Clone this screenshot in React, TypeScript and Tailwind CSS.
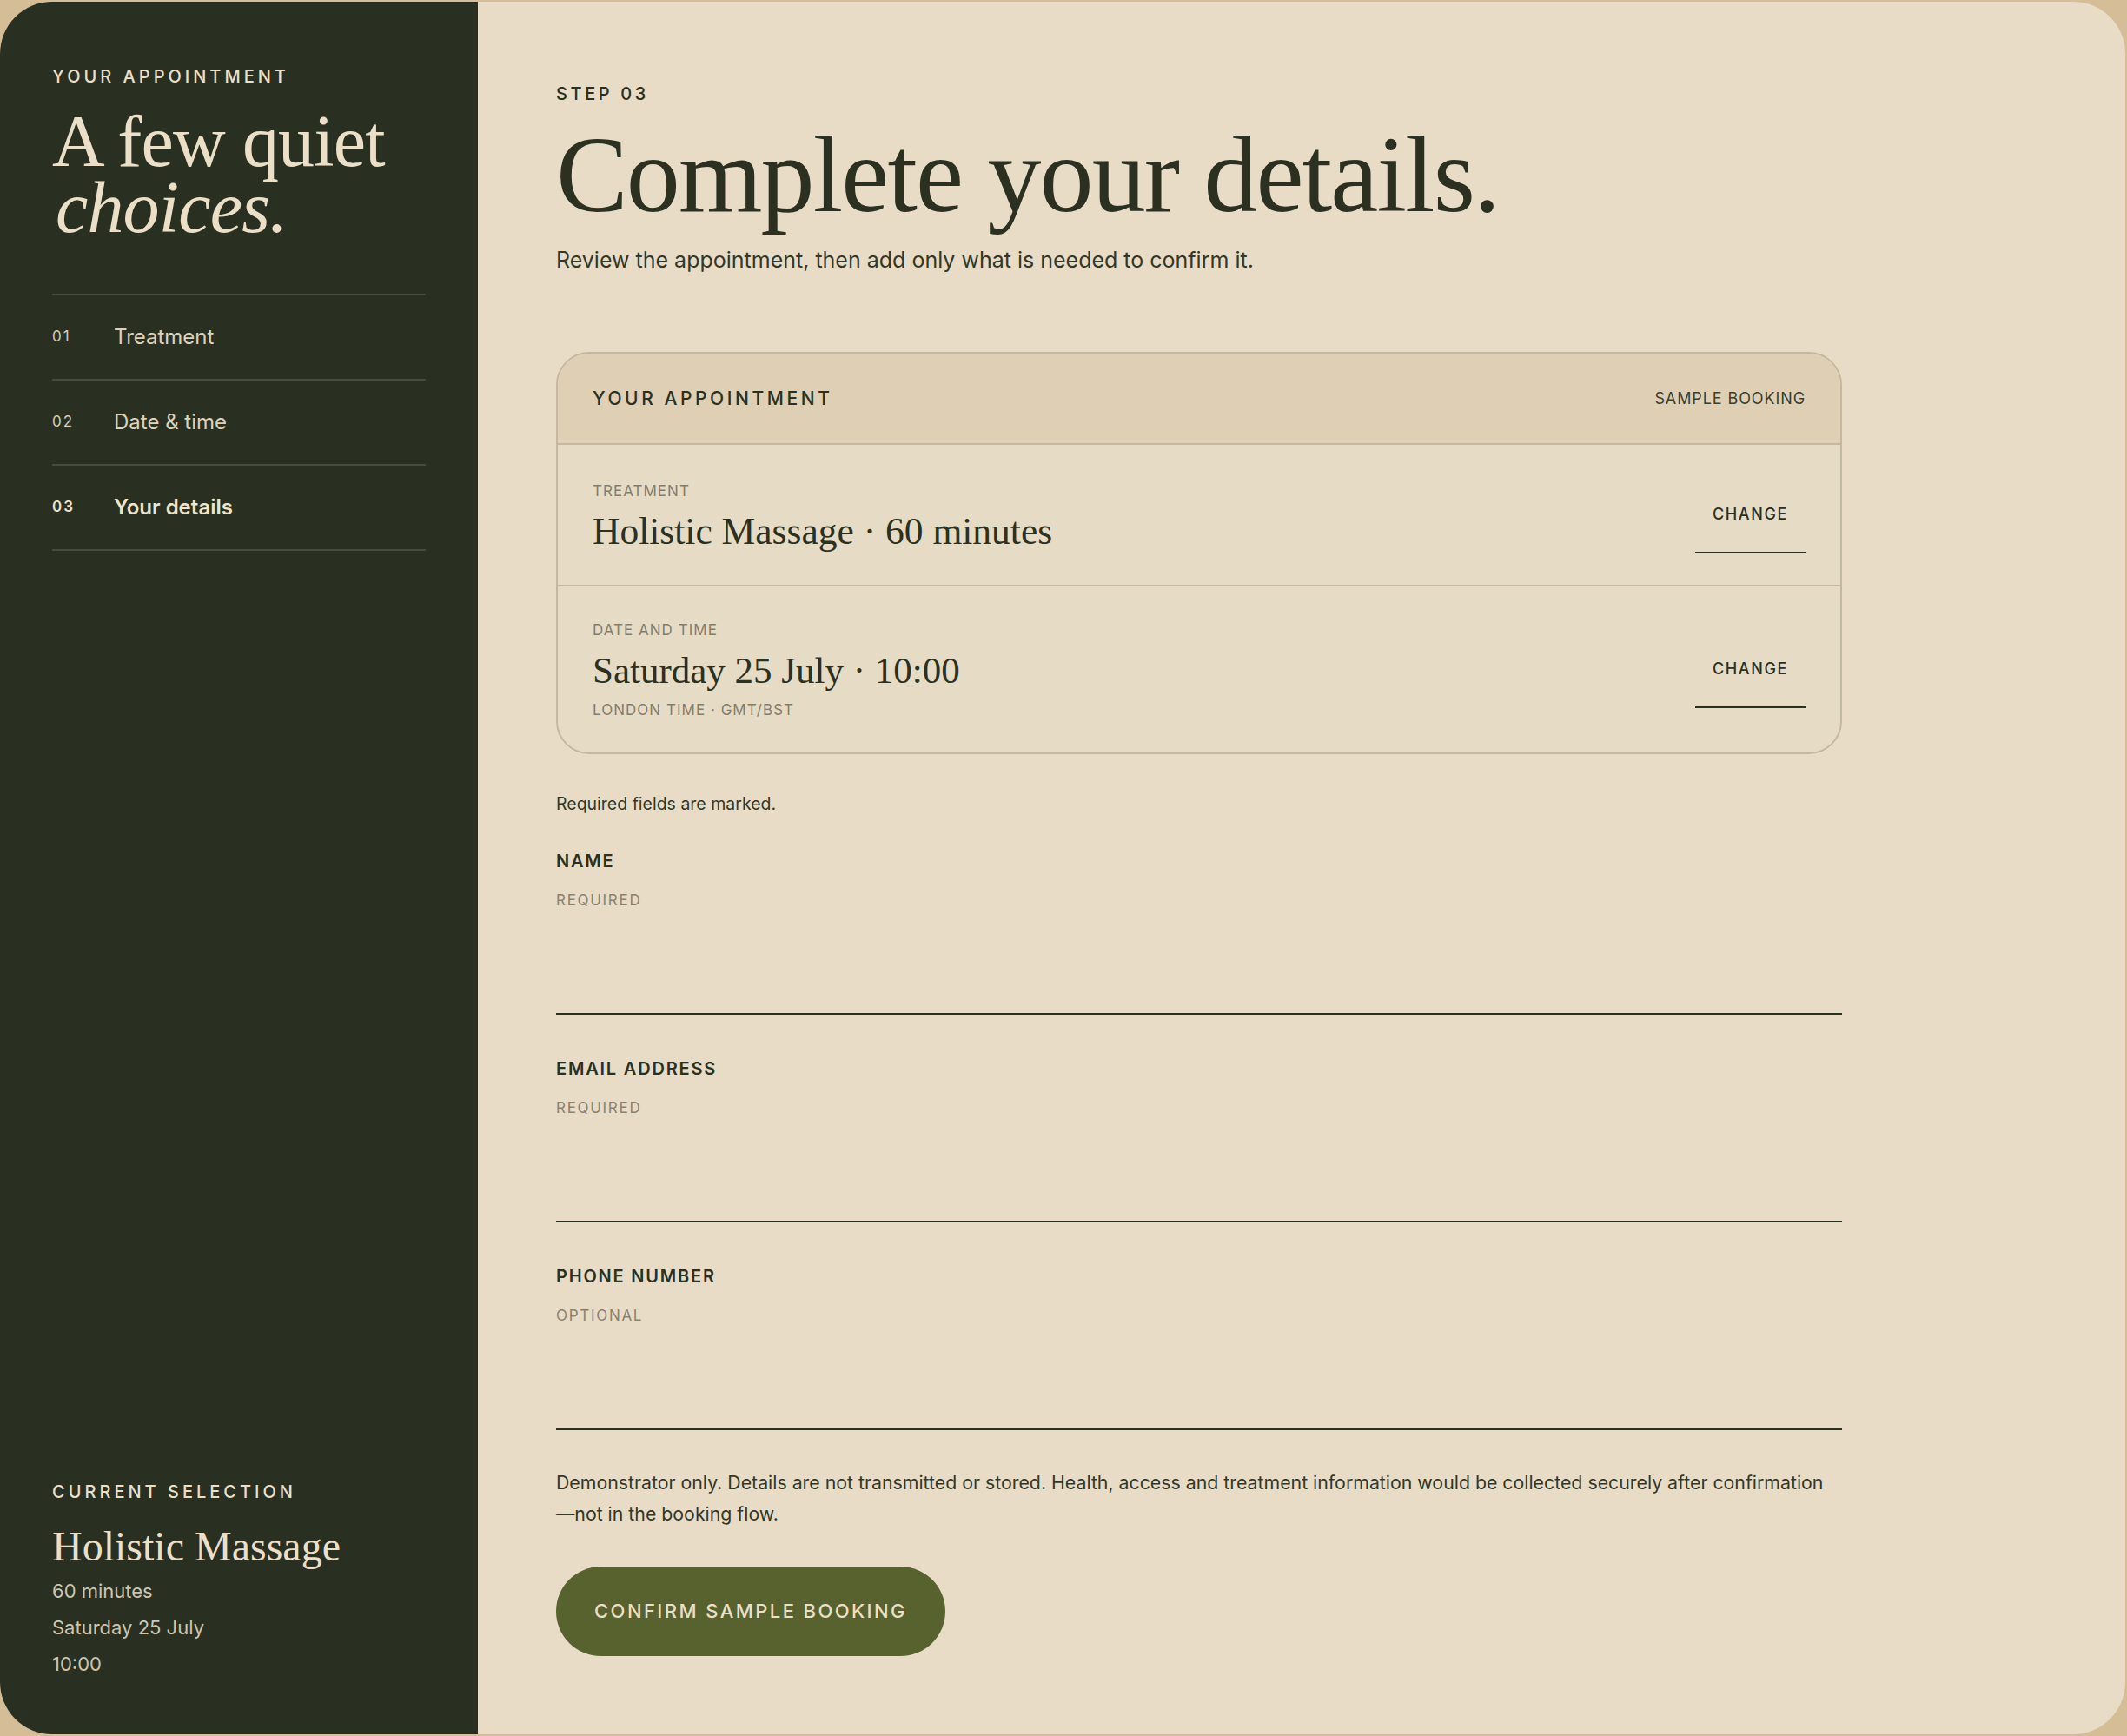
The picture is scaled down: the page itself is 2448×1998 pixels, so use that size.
import React from "react";

const serif = { fontFamily: '"Liberation Serif", "Times New Roman", serif' };

function Field({ label, hint }: { label: string; hint: string }) {
  return (
    <div className="flex flex-col">
      <div className="text-[20px] leading-[28px] font-semibold tracking-[0.09em] text-[#2b3020]">{label}</div>
      <div className="mt-[19px] text-[17px] leading-[24px] tracking-[0.1em] text-[#8a8271]">{hint}</div>
      <div className="h-[120px] border-b-2 border-[#2b3020]" />
    </div>
  );
}

function NavRow({ n, label, active }: { n: string; label: string; active?: boolean }) {
  return (
    <div className="flex h-[98px] items-center border-b-2 border-[#474d3c]">
      <div className={`w-[71px] text-[17px] tracking-[0.12em] ${active ? "text-[#ece0c8] font-semibold" : "text-[#d5cbb5]"}`}>{n}</div>
      <div className={`text-[24px] ${active ? "text-[#efe4cc] font-semibold" : "text-[#ddd2bb]"}`}>{label}</div>
    </div>
  );
}

function ChangeBtn() {
  return (
    <button className="flex h-[88px] items-center border-b-2 border-[#2b3020] px-[20px] text-[18px] font-medium tracking-[0.09em] text-[#2b3020]">
      CHANGE
    </button>
  );
}

export default function App() {
  return (
    <div
      className="h-[1998px] w-full bg-[#d5bd98] pt-[2px] pr-[2px] pb-[2px]"
      style={{ fontFamily: 'Inter, "Liberation Sans", sans-serif' }}
    >
      <div className="flex h-full overflow-hidden rounded-[60px] bg-[#e8dcc6]">
        {/* Sidebar */}
        <aside className="flex h-full w-[550px] shrink-0 flex-col justify-between bg-[#2a3021] px-[60px] pt-[72px] pb-[60px] text-[#ebdfc8]">
          <div>
            <div className="text-[20px] leading-[28px] font-medium tracking-[0.2em]">YOUR APPOINTMENT</div>
            <h1 className="mt-[23px] text-[84px] leading-[76px] tracking-[-0.01em] text-[#ebdfc8]" style={serif}>
              A few quiet
              <br />
              <em className="pl-[4px]">choices.</em>
            </h1>
            <nav className="mt-[61px] border-t-2 border-[#474d3c]">
              <NavRow n="01" label="Treatment" />
              <NavRow n="02" label="Date & time" />
              <NavRow n="03" label="Your details" active />
            </nav>
          </div>
          <div>
            <div className="text-[20px] leading-[28px] font-medium tracking-[0.2em]">CURRENT SELECTION</div>
            <div className="mt-[21px] text-[48px] leading-[56px]" style={serif}>Holistic Massage</div>
            <div className="mt-[2px] flex flex-col text-[22px] leading-[42px] text-[#cfc5ae]">
              <span>60 minutes</span>
              <span>Saturday 25 July</span>
              <span>10:00</span>
            </div>
          </div>
        </aside>

        {/* Main */}
        <main className="flex-1 pl-[90px] pt-[92px] text-[#2b3020]">
          <div className="w-[1480px]">
            <div className="text-[20px] leading-[28px] font-medium tracking-[0.18em]">STEP 03</div>
            <h2 className="mt-[18px] text-[124px] leading-[124px] tracking-[-0.015em]" style={serif}>
              Complete your details.
            </h2>
            <p className="mt-[17px] text-[25px] leading-[36px] text-[#333828]">
              Review the appointment, then add only what is needed to confirm it.
            </p>

            {/* Card */}
            <section className="mt-[88px] overflow-hidden rounded-[38px] border-2 border-[#c4b8a2] bg-[#e6dbc5]">
              <div className="flex h-[105px] items-center justify-between border-b-2 border-[#c4b8a2] bg-[#dfcfb4] px-[40px]">
                <div className="text-[21px] font-medium tracking-[0.17em]">YOUR APPOINTMENT</div>
                <div className="text-[18px] tracking-[0.05em] text-[#3a3f2e]">SAMPLE BOOKING</div>
              </div>
              <div className="flex items-center justify-between border-b-2 border-[#c4b8a2] px-[40px] py-[36px]">
                <div className="pt-[5px]">
                  <div className="text-[17px] leading-[24px] tracking-[0.06em] text-[#857d6c]">TREATMENT</div>
                  <div className="mt-[8px] text-[43.5px] leading-[52px]" style={serif}>Holistic Massage · 60 minutes</div>
                </div>
                <ChangeBtn />
              </div>
              <div className="flex items-center justify-between px-[40px] py-[37px]">
                <div className="pt-[1px]">
                  <div className="text-[17px] leading-[24px] tracking-[0.06em] text-[#857d6c]">DATE AND TIME</div>
                  <div className="mt-[9px] text-[43px] leading-[52px]" style={serif}>Saturday 25 July · 10:00</div>
                  <div className="mt-[7px] text-[17px] leading-[24px] tracking-[0.06em] text-[#857d6c]">LONDON TIME · GMT/BST</div>
                </div>
                <ChangeBtn />
              </div>
            </section>

            <p className="mt-[42px] text-[19.5px] leading-[30px] text-[#333828]">Required fields are marked.</p>

            <div className="mt-[37px] flex flex-col gap-[48px]">
              <Field label="NAME" hint="REQUIRED" />
              <Field label="EMAIL ADDRESS" hint="REQUIRED" />
              <Field label="PHONE NUMBER" hint="OPTIONAL" />
            </div>

            <p className="mt-[42px] text-[21.3px] leading-[36px] text-[#333828]">
              Demonstrator only. Details are not transmitted or stored. Health, access and treatment information would be collected securely after confirmation
              <br />—not in the booking flow.
            </p>

            <button className="mt-[43px] flex h-[103px] w-[448px] items-center justify-center rounded-full bg-[#58622f] text-[22px] font-medium tracking-[0.11em] text-[#ebdfc6]">
              CONFIRM SAMPLE BOOKING
            </button>
          </div>
        </main>
      </div>
    </div>
  );
}
